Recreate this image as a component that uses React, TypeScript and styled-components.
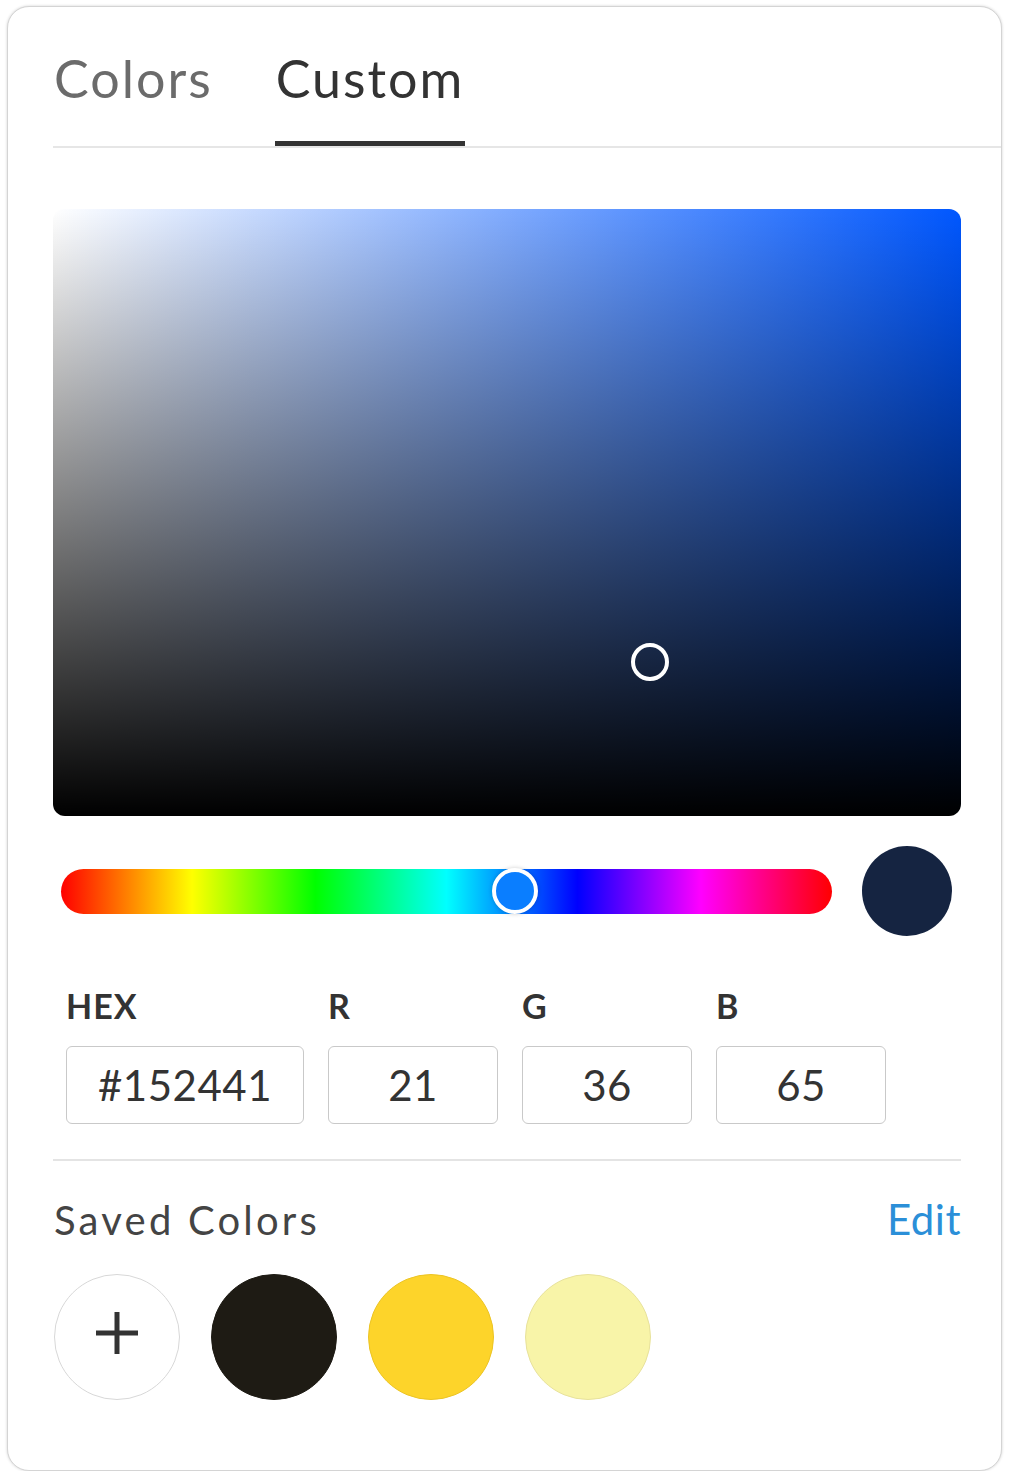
import React from "react";
import styled, { createGlobalStyle } from "styled-components";

const GlobalStyle = createGlobalStyle`
  html, body {
    margin: 0;
    padding: 0;
    background: #ffffff;
  }
  body {
    font-family: Lato, "Open Sans", sans-serif;
    color: #333333;
  }
`;

const hex = "#152441";
const rgb = { r: 21, g: 36, b: 65 };
const hue = 219.5;
const sat = 0.657;
const val = 0.254;
const huePos = 0.589;

const Card = styled.div`
  box-sizing: border-box;
  margin: 6px 0 0 7px;
  width: 995px;
  height: 1465px;
  border: 1px solid #d4d4d4;
  border-radius: 22px;
  box-shadow: 0 0 3px rgba(0, 0, 0, 0.18);
  background: #ffffff;
  overflow: hidden;
  padding-left: 45px;
`;

const TabBar = styled.div`
  display: flex;
  align-items: flex-end;
  gap: 61px;
  padding-top: 41px;
  border-bottom: 2px solid #e6e6e6;
`;

const Tab = styled.div<{ $active?: boolean }>`
  font-size: 52px;
  line-height: 60px;
  letter-spacing: 2px;
  padding: 0 1px 33px;
  color: ${(p) => (p.$active ? "#333333" : "#6b6b6b")};
  border-bottom: 5px solid ${(p) => (p.$active ? "#333333" : "transparent")};
`;

const Body = styled.div`
  width: 908px;
  padding-top: 61px;
`;

const SatArea = styled.div<{ $hue: number }>`
  position: relative;
  height: 607px;
  border-radius: 12px;
  background: linear-gradient(to top, #000000, rgba(0, 0, 0, 0)),
    linear-gradient(to right, #ffffff, hsl(${(p) => p.$hue}, 100%, 50%));
`;

const SatCursor = styled.div`
  position: absolute;
  box-sizing: border-box;
  width: 38px;
  height: 38px;
  margin: -19px 0 0 -19px;
  border: 4px solid #ffffff;
  border-radius: 50%;
`;

const HueRow = styled.div`
  display: flex;
  align-items: center;
  gap: 30px;
  margin-top: 30px;
  padding: 0 9px 0 8px;
`;

const HueTrack = styled.div`
  position: relative;
  flex: 1;
  height: 45px;
  border-radius: 23px;
  background: linear-gradient(
    to right,
    #ff0000,
    #ffff00 17%,
    #00ff00 33%,
    #00ffff 50%,
    #0000ff 67%,
    #ff00ff 83%,
    #ff0000
  );
`;

const HueThumb = styled.div`
  position: absolute;
  top: 50%;
  box-sizing: border-box;
  width: 46px;
  height: 46px;
  margin: -23px 0 0 -23px;
  border: 4px solid #ffffff;
  border-radius: 50%;
  box-shadow: 0 0 4px rgba(0, 0, 0, 0.2);
`;

const Preview = styled.div<{ $color: string }>`
  width: 90px;
  height: 90px;
  border-radius: 50%;
  background: ${(p) => p.$color};
`;

const Fields = styled.div`
  display: flex;
  gap: 24px;
  margin: 50px 0 0 13px;
`;

const Field = styled.div<{ $width: number }>`
  display: flex;
  flex-direction: column;
  gap: 20px;
  width: ${(p) => p.$width}px;
`;

const FieldLabel = styled.div`
  font-size: 34px;
  line-height: 40px;
  font-weight: 700;
  letter-spacing: 1px;
  color: #333333;
`;

const FieldInput = styled.div`
  box-sizing: border-box;
  height: 78px;
  border: 1.5px solid #c9c9c9;
  border-radius: 6px;
  display: flex;
  align-items: center;
  justify-content: center;
  font-size: 42px;
  letter-spacing: 0.5px;
  color: #333333;
`;

const Divider = styled.div`
  height: 2px;
  background: #e4e4e4;
  margin-top: 35px;
`;

const SavedHeader = styled.div`
  display: flex;
  justify-content: space-between;
  align-items: baseline;
  margin-top: 34px;
  line-height: 48px;
`;

const SavedTitle = styled.div`
  font-size: 40px;
  letter-spacing: 3.2px;
  color: #444444;
  padding-left: 1px;
`;

const EditLink = styled.div`
  font-size: 42px;
  letter-spacing: 0.5px;
  color: #2b8fd8;
`;

const Swatches = styled.div`
  display: flex;
  gap: 31px;
  margin-top: 30px;
  padding-left: 1px;
`;

const Swatch = styled.div<{ $fill: string; $edge: string }>`
  box-sizing: border-box;
  width: 126px;
  height: 126px;
  border-radius: 50%;
  background: ${(p) => p.$fill};
  border: 1.5px solid ${(p) => p.$edge};
  display: flex;
  align-items: center;
  justify-content: center;
`;

const saved = [
  { fill: "#1e1b14", edge: "#1e1b14" },
  { fill: "#fdd42a", edge: "#ecc424" },
  { fill: "#f8f4a8", edge: "#e8e29c" },
];

const PlusIcon: React.FC = () => (
  <svg width="44" height="44" viewBox="0 0 44 44" style={{ marginTop: -8 }}>
    <path d="M22 1v42M1 22h42" stroke="#333333" strokeWidth="5" fill="none" />
  </svg>
);

const App: React.FC = () => {
  return (
    <>
      <GlobalStyle />
      <Card>
        <TabBar>
          <Tab>Colors</Tab>
          <Tab $active>Custom</Tab>
        </TabBar>
        <Body>
          <SatArea $hue={hue}>
            <SatCursor style={{ left: `${sat * 100}%`, top: `${(1 - val) * 100}%` }} />
          </SatArea>
          <HueRow>
            <HueTrack>
              <HueThumb
                style={{
                  left: `${huePos * 100}%`,
                  background: `hsl(${hue - 8}, 100%, 52%)`,
                }}
              />
            </HueTrack>
            <Preview $color={hex} />
          </HueRow>
          <Fields>
            <Field $width={238}>
              <FieldLabel>HEX</FieldLabel>
              <FieldInput>{hex}</FieldInput>
            </Field>
            <Field $width={170}>
              <FieldLabel>R</FieldLabel>
              <FieldInput>{rgb.r}</FieldInput>
            </Field>
            <Field $width={170}>
              <FieldLabel>G</FieldLabel>
              <FieldInput>{rgb.g}</FieldInput>
            </Field>
            <Field $width={170}>
              <FieldLabel>B</FieldLabel>
              <FieldInput>{rgb.b}</FieldInput>
            </Field>
          </Fields>
          <Divider />
          <SavedHeader>
            <SavedTitle>Saved Colors</SavedTitle>
            <EditLink>Edit</EditLink>
          </SavedHeader>
          <Swatches>
            <Swatch $fill="#ffffff" $edge="#d8d8d8">
              <PlusIcon />
            </Swatch>
            {saved.map((s) => (
              <Swatch key={s.fill} $fill={s.fill} $edge={s.edge} />
            ))}
          </Swatches>
        </Body>
      </Card>
    </>
  );
};

export default App;
